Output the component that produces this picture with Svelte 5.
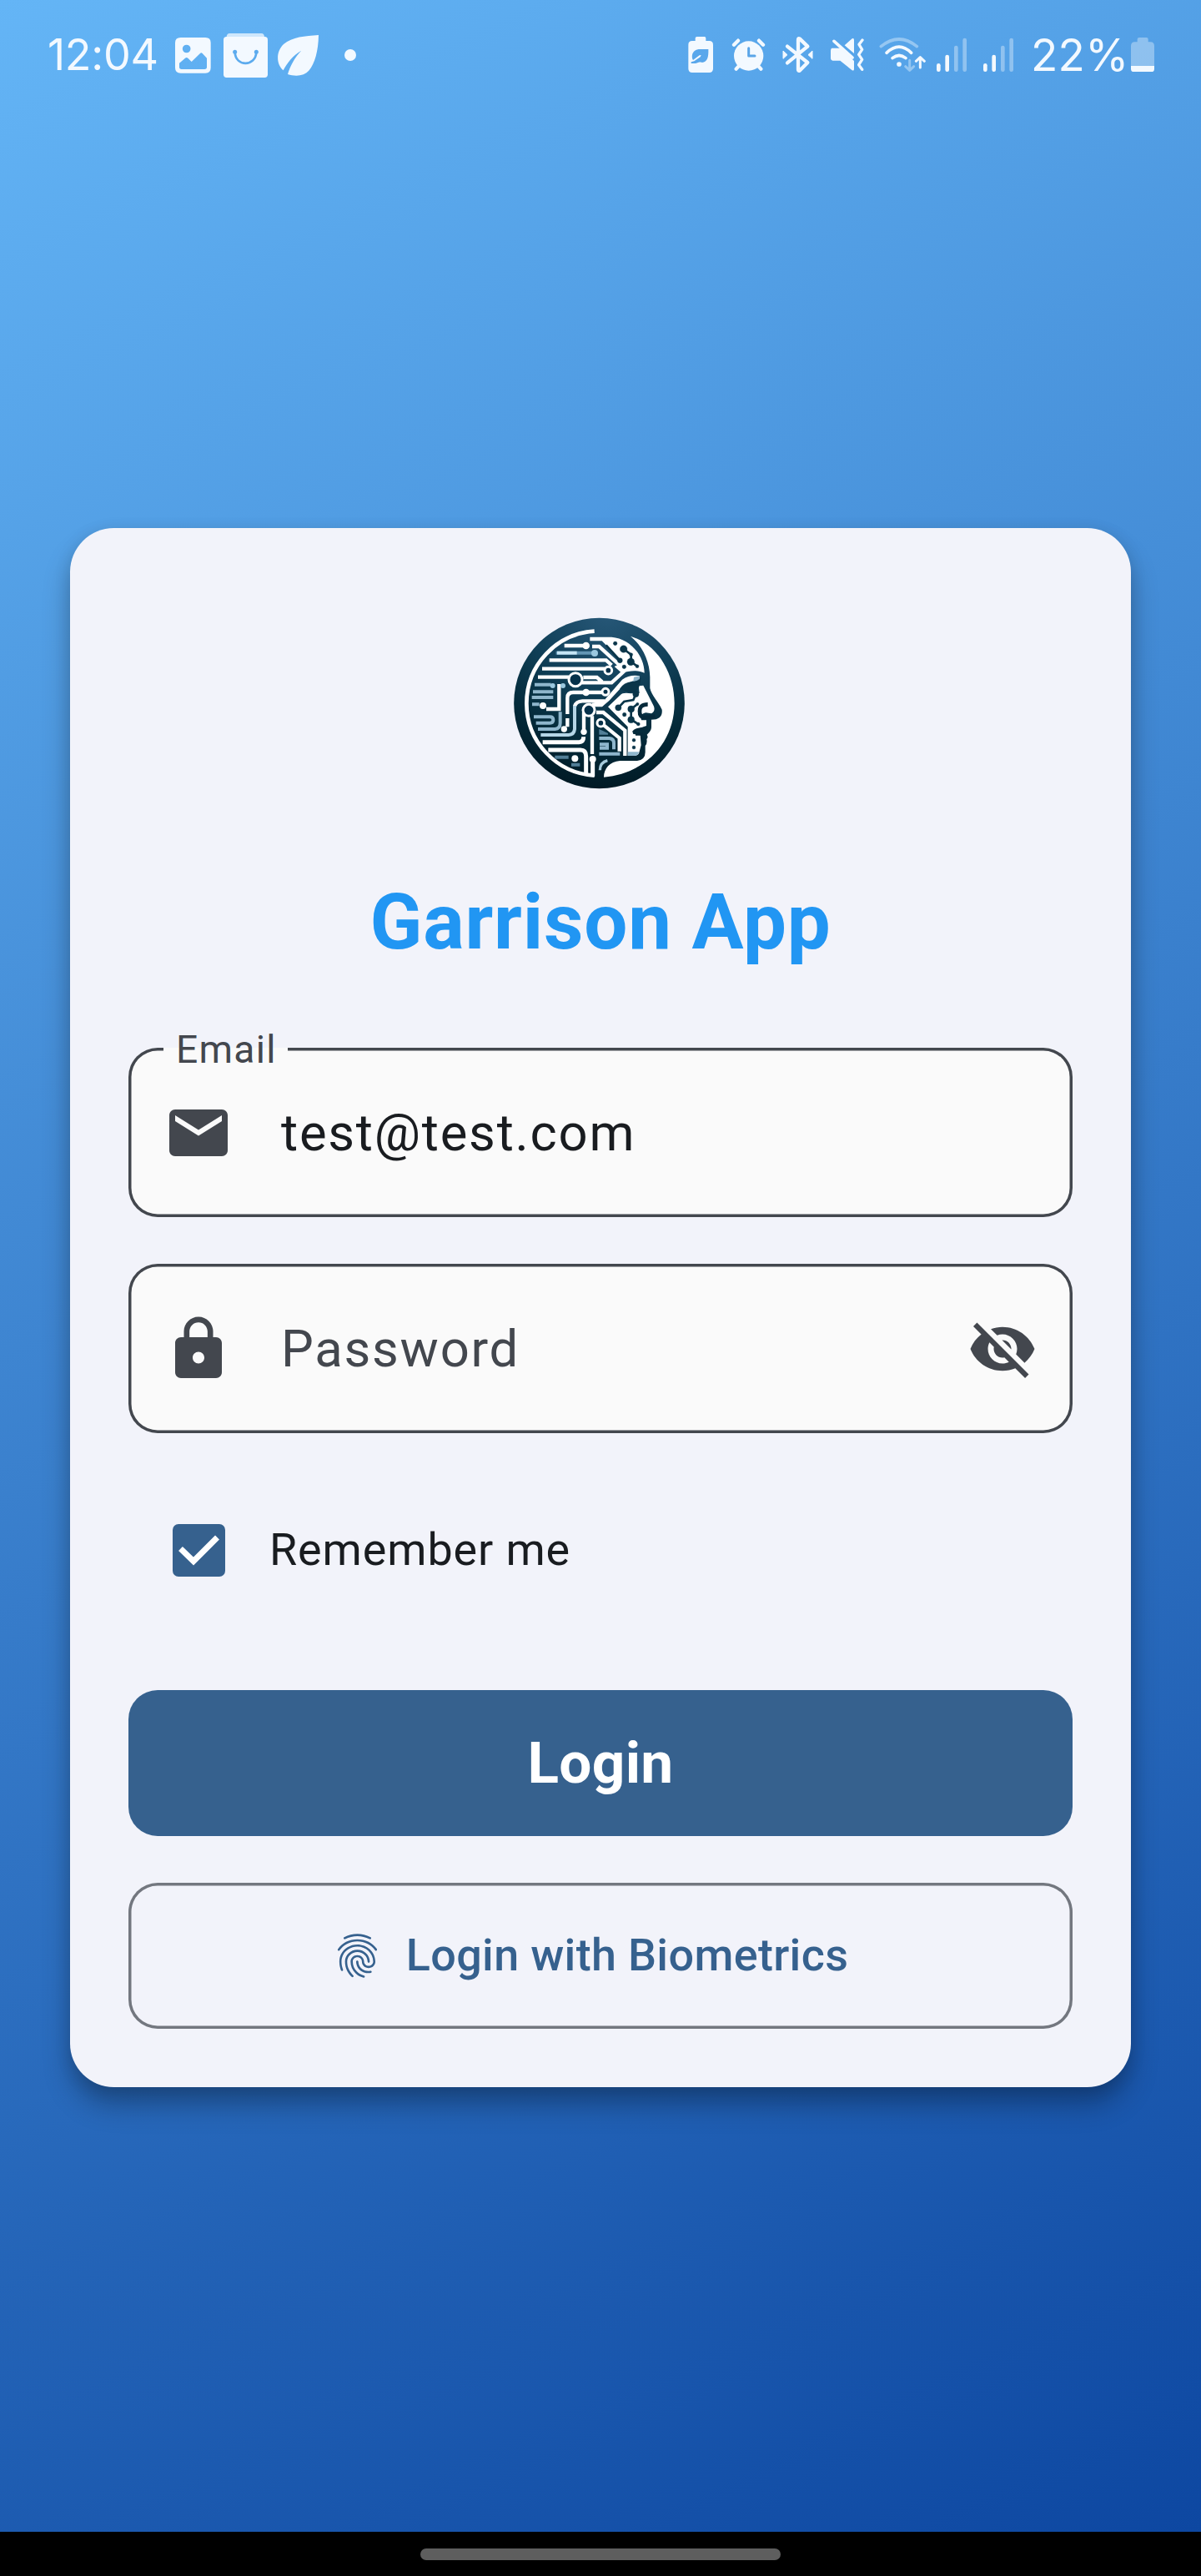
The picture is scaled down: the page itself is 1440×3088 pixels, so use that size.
<script>
  let email = $state('test@test.com');
  let remember = $state(true);

  const signalBars = [
    { x: 76, y: 175, on: true },
    { x: 107, y: 144, on: true },
    { x: 139, y: 111, on: false },
    { x: 170, y: 84, on: false }
  ];
</script>

{#snippet signal()}
  <svg class="signal" viewBox="66 48 114 180">
    {#each signalBars as bar}
      <path d="M{bar.x} {bar.y}V191" stroke="#fff" stroke-width="14" stroke-linecap="round" opacity={bar.on ? 0.94 : 0.35} />
    {/each}
  </svg>
{/snippet}

<div class="screen">
  <header class="status">
    <div class="side">
      <span class="time">12:04</span>
      <svg class="photo" viewBox="510 48 129 180">
        <path fill-rule="evenodd" d="M530 75H619Q638 75 638 94V184Q638 203 619 203H530Q510 203 510 184V94Q510 75 530 75ZM551 101A14 14 0 1 0 551 130A14 14 0 1 0 551 101ZM525 167V181Q525 189 533 189H616Q624 189 624 181V149L608 132Q604 128 600 132L569 162L556 149Q551 145 546 149Z" />
      </svg>
      <svg class="bag" viewBox="684 48 159 180">
        <path opacity=".75" d="M706 60H820Q831 60 831 74H695Q695 60 706 60Z" />
        <rect x="684" y="72" width="159" height="147" rx="11" />
        <path d="M725 128C727 181 799 181 802 128" fill="none" stroke="#5cabee" stroke-width="8" />
        <circle cx="725" cy="127" r="7.500" fill="#5cabee" /><circle cx="802" cy="127" r="7.500" fill="#5cabee" />
      </svg>
      <svg class="leaf" viewBox="879 48 147 180">
        <path d="M1026 66C1025 125 1012 168 992 193C973 216 940 215 915 207C923 178 941 145 964 122C934 138 913 166 899 193C874 172 871 127 900 99C932 72 977 70 1026 66Z" />
      </svg>
      <svg class="dot" viewBox="1119 48 42 180"><circle cx="1140" cy="138" r="21" /></svg>
    </div>

    <div class="side">
      <svg class="saver" viewBox="75 48 90 180">
        <path fill-rule="evenodd" d="M107 72H134Q139 72 139 77V87H151Q165 87 165 101V187Q165 201 151 201H90Q76 201 76 187V101Q76 87 90 87H101V77Q101 72 107 72ZM148 117H113C88 120 86 146 93 156L116 139L122 138L119 145L97 160L86 163V168H102C111 165 118 162 125 165C145 163 149 145 148 117Z" />
      </svg>
      <svg class="alarm" viewBox="231 48 123 180">
        <g stroke="#f3f9ff" stroke-width="13" stroke-linecap="round"><path d="M240 101L255 86M330 86L345 101M248 188L257 178M337 188L328 178" /></g>
        <circle cx="293" cy="141" r="53" />
        <path d="M293 113V141H315" fill="none" stroke="#5aa5e8" stroke-width="9" stroke-linecap="round" stroke-linejoin="round" />
      </svg>
      <svg class="bt" viewBox="414 48 111 180">
        <path d="M432 107L505 165L476 194Q471 196 471 190V83Q471 76 477 80L505 107L432 166" fill="none" stroke="#f3f9ff" stroke-width="13" stroke-linecap="round" stroke-linejoin="round" />
        <path d="M417 123L432 137L417 151ZM522 123L507 137L522 151Z" stroke="#f3f9ff" stroke-width="3" stroke-linejoin="round" />
      </svg>
      <svg class="mute" viewBox="588 48 120 180">
        <path d="M592 113Q588 115 588 122V151Q588 157 595 158H622L664 192Q672 197 672 188V159L624 113ZM638 103L665 79Q672 75 672 84V132Z" />
        <path d="M600 88L666 147" fill="none" stroke="#f3f9ff" stroke-width="11" stroke-linecap="round" />
        <path d="M702 84L690 100L701 118L689 136L701 154L689 173L701 190" fill="none" stroke="#f3f9ff" stroke-width="10" stroke-linecap="round" stroke-linejoin="round" />
      </svg>
      <svg class="wifi" viewBox="762 48 168 180">
        <g fill="none" stroke="#f3f9ff" stroke-width="11" stroke-linecap="round" stroke-linejoin="round">
          <path opacity=".4" d="M769 107Q834 55 898 107" />
          <path d="M789 130Q834 87 878 130M810 149Q834 130 858 149" />
          <path opacity=".4" stroke-width="9" d="M872 157V190M857 179L872 193L887 179" />
          <path stroke-width="9" d="M910 183V148M895 160L910 146L925 160" />
        </g>
        <circle cx="834" cy="171" r="8.500" />
      </svg>
      {@render signal()}
      {@render signal()}
      <span class="percent">22%</span>
      <svg class="battery" viewBox="768 48 84 180">
        <path opacity=".37" d="M798 75H824Q830 75 830 81V91H838Q852 91 852 105V178H768V105Q768 91 782 91H791V81Q791 75 798 75Z" />
        <path d="M768 177H852V188Q852 198 842 198H778Q768 198 768 188Z" />
      </svg>
    </div>
  </header>

  <main class="card">
    <svg class="logo" viewBox="-60 -81 840 840">
      <defs>
        <radialGradient id="disc" cx=".55" cy="-.05" r="1.050">
          <stop offset="0" stop-color="#28597a" />
          <stop offset=".45" stop-color="#103f57" />
          <stop offset=".75" stop-color="#042a39" />
          <stop offset="1" stop-color="#011a25" />
        </radialGradient>
      </defs>
      <circle cx="355.500" cy="339" r="307" fill="url(#disc)" />
      <!-- crescent behind the profile -->
      <path fill="#fff" d="M468 98C565 128 626 230 626 340C626 480 522 592 372 605C372 575 393 548 430 546H492Q521 542 521 515V492Q529 484 526 468Q533 462 527 452Q543 438 543 425V398Q585 398 581 362C566 330 544 312 538 285V245C537 185 508 130 468 98Z" />
      <!-- forehead -->
      <path fill="#fff" d="M322 101H400C465 106 517 165 518 230C494 219 466 221 436 230L410 207L426 199L438 188L365 115H322Z" />
      <!-- brow and eye -->
      <path fill="#fff" d="M330 338L372 330L438 254Q466 235 500 241V256Q460 258 435 282L391 330L376 343L366 352H330Z" />
      <path fill="#8fb6cc" d="M480 245L500 241V256L478 261Z" />
      <!-- cheek, nose and lips -->
      <path fill="#fff" d="M387 352L432 309Q440 299 470 304L500 303L497 277L514 275L552 350Q558 368 543 376L523 373Q500 378 507 400H525V420L492 432Q474 438 477 449L503 454L506 490L500 512Q498 528 480 528H458V424Z" />
      <path d="M530 343Q500 343 501 368Q500 390 520 391L556 386" fill="none" stroke="#06293a" stroke-width="14" stroke-linejoin="round" />
      <path d="M478 444Q482 434 500 432L530 428M486 451H512" fill="none" stroke="#06293a" stroke-width="9" />
      <path fill="#8fb6cc" d="M458 514H498Q496 528 480 528H458Z" />
      <g fill="none" stroke="#fff" stroke-width="14">
        <path d="M338 80A260 260 0 0 0 338 599" />
        <g stroke-width="13">
          <path d="M230 132H305M176 184H380L400 202M150 215H375M135 245H246M298 246H347L366 262M290 265H400L447 222M330 135H355L432 205" />
          <path d="M165 360H211V270M300 300H262Q241 300 241 320V378M241 393V424M312 300H368" />
          <path d="M375 331H295Q272 332 267 350" />
          <path d="M300 372V440M330 385V522M345 372H370L448 437V528M372 418L428 464V512" />
          <path d="M152 479H283Q299 479 299 460M172 507H288Q308 507 308 530V592M332 545V602" stroke-width="15" />
        </g>
      </g>
      <g fill="none" stroke="#8fb6cc" stroke-width="12">
        <path d="M200 158H335" stroke="#6396b4" /><path d="M204 158H275" stroke="#c5e5f5" />
        <path d="M123 272H182M117 298H190M113 318H190M114 343H140M120 388H178Q190 388 190 399Q190 410 178 410H128M135 432H196Q215 430 215 410V370" />
        <path d="M267 348V432Q265 452 245 453H145" stroke="#b5d6e7" />
        <path d="M355 465H392Q408 467 408 482V505M355 521H430M357 487H384V500H357" />
        <path d="M196 533H245M255 560H286" stroke="#527f98" />
        <path d="M358 580Q358 552 385 545" stroke="#a6cadb" stroke-width="10" />
      </g>
      <path fill="#527f98" d="M355 432L387 447V452H355Z" />
      <g fill="#fff">
        <circle cx="308" cy="132" r="13" /><circle cx="153" cy="348" r="12" /><circle cx="308" cy="300" r="13" />
        <circle cx="229" cy="432" r="11" /><circle cx="300" cy="442" r="11" /><circle cx="332" cy="540" r="12" /><circle cx="268" cy="538" r="12" />
      </g>
      <g fill="#9bc8df"><circle cx="339" cy="159" r="12" /><circle cx="188" cy="276" r="9" /><circle cx="225" cy="276" r="9" /></g>
      <g fill="#06314a" stroke="#fff" stroke-width="9">
        <circle cx="270" cy="254" r="24" /><circle cx="388" cy="221" r="13" /><circle cx="378" cy="298" r="12" /><circle cx="318" cy="364" r="21" /><circle cx="361" cy="410" r="13" />
      </g>
      <!-- nodes on the face -->
      <g fill="#0a3549" stroke="#0a3549">
        <circle cx="413" cy="124" r="7" /><circle cx="443" cy="144" r="13" /><circle cx="470" cy="164" r="6" /><circle cx="469" cy="190" r="13" /><circle cx="445" cy="208" r="7" /><circle cx="492" cy="206" r="6" />
        <circle cx="430" cy="185" r="9" /><circle cx="424" cy="355" r="11" /><circle cx="487" cy="306" r="11" /><circle cx="470" cy="360" r="12" /><circle cx="493" cy="342" r="5" /><circle cx="446" cy="380" r="7" /><circle cx="470" cy="398" r="12" /><circle cx="496" cy="414" r="6" /><circle cx="480" cy="472" r="6" /><circle cx="480" cy="498" r="6" />
        <path d="M443 144L470 164V190L492 206M424 355L445 333L478 327L487 306M470 360L493 342M470 360V398L496 414M380 130L430 185" fill="none" stroke-width="8" />
        <path d="M430 287Q445 262 474 263Q492 262 505 248L501 270Q497 297 465 300Z" />
      </g>
    </svg>

    <h1>Garrison App</h1>

    <label class="field">
      <span class="notch">Email</span>
      <svg class="icon" viewBox="0 0 24 24"><path d="M20 4H4c-1.100 0-1.990.9-1.990 2L2 18c0 1.100.9 2 2 2h16c1.100 0 2-.9 2-2V6c0-1.100-.9-2-2-2zm0 4l-8 5-8-5V6l8 5 8-5v2z" /></svg>
      <span class="value">{email}</span>
    </label>

    <label class="field">
      <svg class="icon" viewBox="0 0 24 24"><path d="M18 8h-1V6c0-2.760-2.240-5-5-5S7 3.240 7 6v2H6c-1.100 0-2 .9-2 2v10c0 1.100.9 2 2 2h12c1.100 0 2-.9 2-2V10c0-1.100-.9-2-2-2zm-6 9c-1.100 0-2-.9-2-2s.9-2 2-2 2 .9 2 2-.9 2-2 2zm3.100-9H8.900V6c0-1.710 1.390-3.100 3.100-3.100 1.710 0 3.100 1.390 3.100 3.100v2z" /></svg>
      <span class="value hint">Password</span>
      <svg class="icon" viewBox="0 0 24 24"><path d="M12 7c2.760 0 5 2.240 5 5 0 .65-.13 1.260-.36 1.830l2.920 2.920c1.510-1.260 2.700-2.890 3.430-4.750-1.730-4.390-6-7.500-11-7.500-1.400 0-2.740.25-3.980.7l2.160 2.160C10.740 7.130 11.350 7 12 7zM2 4.270l2.280 2.280.46.46C3.080 8.300 1.780 10.020 1 12c1.730 4.390 6 7.500 11 7.500 1.550 0 3.030-.3 4.380-.84l.42.42L19.730 22 21 20.730 3.270 3 2 4.270zM7.530 9.800l1.550 1.550c-.05.21-.08.43-.08.65 0 1.660 1.340 3 3 3 .22 0 .44-.03.65-.08l1.550 1.550c-.67.33-1.410.53-2.200.53-2.760 0-5-2.240-5-5 0-.79.2-1.530.53-2.200zm4.310-.78l3.150 3.150.02-.16c0-1.660-1.340-3-3-3l-.17.01z" /></svg>
    </label>

    <div class="remember">
      <button class="check" class:on={remember} aria-label="Remember me" onclick={() => (remember = !remember)}>
        {#if remember}
          <svg viewBox="0 0 63 63"><path d="M9.500 29.500L25 44.500L53.500 16" fill="none" stroke="#fff" stroke-width="7" /></svg>
        {/if}
      </button>
      <span>Remember me</span>
    </div>

    <button class="login">Login</button>

    <button class="bio">
      <svg viewBox="0 0 24 24"><path d="M17.810 4.470c-.08 0-.16-.02-.23-.06C15.660 3.420 14 3 12.010 3c-1.980 0-3.860.47-5.570 1.410-.24.13-.54.04-.68-.2-.13-.24-.04-.55.2-.68C7.820 2.520 9.860 2 12.010 2c2.130 0 3.990.47 6.030 1.520.25.13.34.43.21.67-.09.18-.26.28-.44.28zM3.500 9.720c-.1 0-.2-.03-.29-.09-.23-.16-.28-.47-.12-.7.99-1.400 2.250-2.500 3.750-3.270C9.980 4.040 14 4.030 17.150 5.650c1.500.77 2.760 1.860 3.750 3.250.16.22.11.54-.12.7-.23.16-.54.11-.7-.12-.9-1.260-2.040-2.250-3.390-2.940-2.870-1.470-6.540-1.470-9.400.01-1.360.7-2.500 1.700-3.400 2.960-.08.14-.23.21-.39.21zm6.250 12.070c-.13 0-.26-.05-.35-.15-.87-.87-1.340-1.430-2.010-2.640-.69-1.230-1.050-2.730-1.050-4.340 0-2.970 2.540-5.390 5.660-5.390s5.660 2.420 5.660 5.390c0 .28-.22.5-.5.5s-.5-.22-.5-.5c0-2.420-2.090-4.390-4.660-4.390-2.570 0-4.660 1.970-4.660 4.390 0 1.440.32 2.770.93 3.850.64 1.150 1.080 1.640 1.850 2.420.19.2.19.51 0 .71-.11.1-.24.15-.37.15zm7.170-1.850c-1.190 0-2.240-.3-3.100-.89-1.490-1.010-2.380-2.650-2.380-4.390 0-.28.22-.5.5-.5s.5.22.5.5c0 1.410.72 2.740 1.940 3.560.71.48 1.540.71 2.540.71.24 0 .64-.03 1.040-.1.27-.05.53.13.58.41.05.27-.13.53-.41.58-.57.11-1.070.12-1.210.12zM14.910 22c-.04 0-.09-.01-.13-.02-1.590-.44-2.630-1.030-3.720-2.100-1.400-1.390-2.170-3.240-2.170-5.220 0-1.620 1.380-2.940 3.080-2.940 1.700 0 3.080 1.320 3.080 2.940 0 1.070.93 1.940 2.080 1.940s2.080-.87 2.080-1.940c0-3.770-3.250-6.830-7.250-6.830-2.840 0-5.440 1.580-6.610 4.030-.39.81-.59 1.760-.59 2.800 0 .78.07 2.010.67 3.610.1.26-.03.55-.29.64-.26.1-.55-.04-.64-.29-.49-1.310-.73-2.610-.73-3.960 0-1.200.23-2.290.68-3.240 1.330-2.790 4.280-4.600 7.510-4.600 4.550 0 8.250 3.510 8.250 7.830 0 1.620-1.380 2.940-3.080 2.940s-3.080-1.320-3.080-2.940c0-1.070-.93-1.940-2.080-1.940s-2.080.87-2.080 1.940c0 1.710.66 3.310 1.870 4.510.95.94 1.860 1.460 3.270 1.850.27.07.42.35.35.61-.05.23-.26.38-.47.38z" /></svg>
      <span>Login with Biometrics</span>
    </button>
  </main>

  <footer><div class="pill"></div></footer>
</div>

<style>
  :global(body) { margin: 0; background: #000; }
  .screen {
    box-sizing: border-box;
    width: 1440px;
    height: 3088px;
    display: flex;
    flex-direction: column;
    align-items: center;
    font-family: Roboto, "Liberation Sans", sans-serif;
    background: linear-gradient(154.600deg, #64b5f6, #0d47a1) 0 0 / 1440px 3035px no-repeat #000;
  }
  svg { display: block; flex: none; }
  button { font: inherit; border: 0; padding: 0; margin: 0; }

  .status {
    box-sizing: border-box;
    width: 100%;
    height: 96px;
    padding: 36px 56px 0 57px;
    display: flex;
    justify-content: space-between;
    color: #f3f9ff;
    fill: #f3f9ff;
    font-family: Inter, "Liberation Sans", sans-serif;
    font-size: 52px;
    line-height: 60px;
  }
  .side { display: flex; }
  .side svg { height: 60px; }
  .time { width: 153px; letter-spacing: -0.300px; white-space: nowrap; }
  .photo { width: 43px; }
  .bag { width: 53px; margin-left: 15px; }
  .leaf { width: 49px; margin-left: 12px; }
  .dot { width: 14px; margin-left: 31px; }
  .saver { width: 30px; }
  .alarm { width: 41px; margin-left: 22px; }
  .bt { width: 37px; margin-left: 20px; }
  .mute { width: 40px; margin-left: 21px; }
  .wifi { width: 56px; margin-left: 18px; }
  .signal { width: 38px; margin-left: 12px; }
  .signal + .signal { margin-left: 18px; }
  .percent { width: 120px; margin-left: 20px; font-size: 53px; letter-spacing: 0.300px; white-space: nowrap; }
  .battery { width: 28px; }

  .card {
    box-sizing: border-box;
    width: 1272px;
    height: 1869px;
    margin-top: 537px;
    padding: 70px;
    display: flex;
    flex-direction: column;
    border-radius: 52.500px;
    background: #f2f3fa;
    box-shadow: 0 22px 34px -2px rgba(0, 0, 0, 0.3), 0 4px 20px rgba(0, 0, 0, 0.1);
  }
  .logo { width: 280px; height: 280px; align-self: center; }
  h1 {
    margin: 69px 0 96px;
    font-size: 92.400px;
    line-height: 108px;
    font-weight: 700;
    letter-spacing: 0.800px;
    text-align: center;
    color: #2196f3;
  }
  .field {
    box-sizing: border-box;
    position: relative;
    height: 203px;
    flex: none;
    padding: 0 42px;
    display: flex;
    align-items: center;
    border-radius: 35px;
    background: #fafafa;
    box-shadow: inset 0 0 0 3.500px #43474e;
    color: #191c20;
    font-size: 61.600px;
    letter-spacing: 1.750px;
  }
  .field + .field { margin-top: 56px; }
  .icon { width: 84px; height: 84px; fill: #43474e; }
  .value { flex: 1; margin-left: 57px; }
  .hint { color: #43474e; }
  .notch {
    position: absolute;
    left: 42px;
    top: -25px;
    width: 149px;
    box-sizing: border-box;
    padding-left: 15px;
    font-size: 46.200px;
    line-height: 54px;
    letter-spacing: 1.300px;
    color: #43474e;
    background: linear-gradient(#f2f3fa 25px, #fafafa 25px);
  }
  .remember {
    height: 168px;
    margin: 56px 0 84px;
    padding-left: 52.500px;
    display: flex;
    align-items: center;
    gap: 53.500px;
    color: #191c20;
    font-size: 53.900px;
    letter-spacing: 0.900px;
  }
  .remember span, .bio span { padding-bottom: 2px; }
  .check {
    width: 63px;
    height: 63px;
    border-radius: 7px;
    background: transparent;
    box-shadow: inset 0 0 0 7px #43474e;
  }
  .check.on { background: #36618e; box-shadow: none; }
  .login {
    height: 175px;
    border-radius: 35px;
    background: #36618e;
    color: #fff;
    font-size: 69.300px;
    font-weight: 700;
    letter-spacing: 0.350px;
  }
  .bio {
    height: 175px;
    margin-top: 56px;
    padding-right: 26px;
    display: flex;
    align-items: center;
    justify-content: center;
    gap: 27px;
    border-radius: 35px;
    background: transparent;
    box-shadow: inset 0 0 0 3.500px #73777f;
    color: #36618e;
    fill: #36618e;
    font-size: 53.900px;
    font-weight: 500;
    letter-spacing: 0.350px;
  }
  .bio svg { width: 63px; height: 63px; }

  footer {
    width: 100%;
    height: 53px;
    margin-top: 533px;
    display: flex;
    justify-content: center;
    align-items: center;
    background: #000;
  }
  .pill { width: 432px; height: 14px; border-radius: 7px; background: #5e5e5e; }
</style>
